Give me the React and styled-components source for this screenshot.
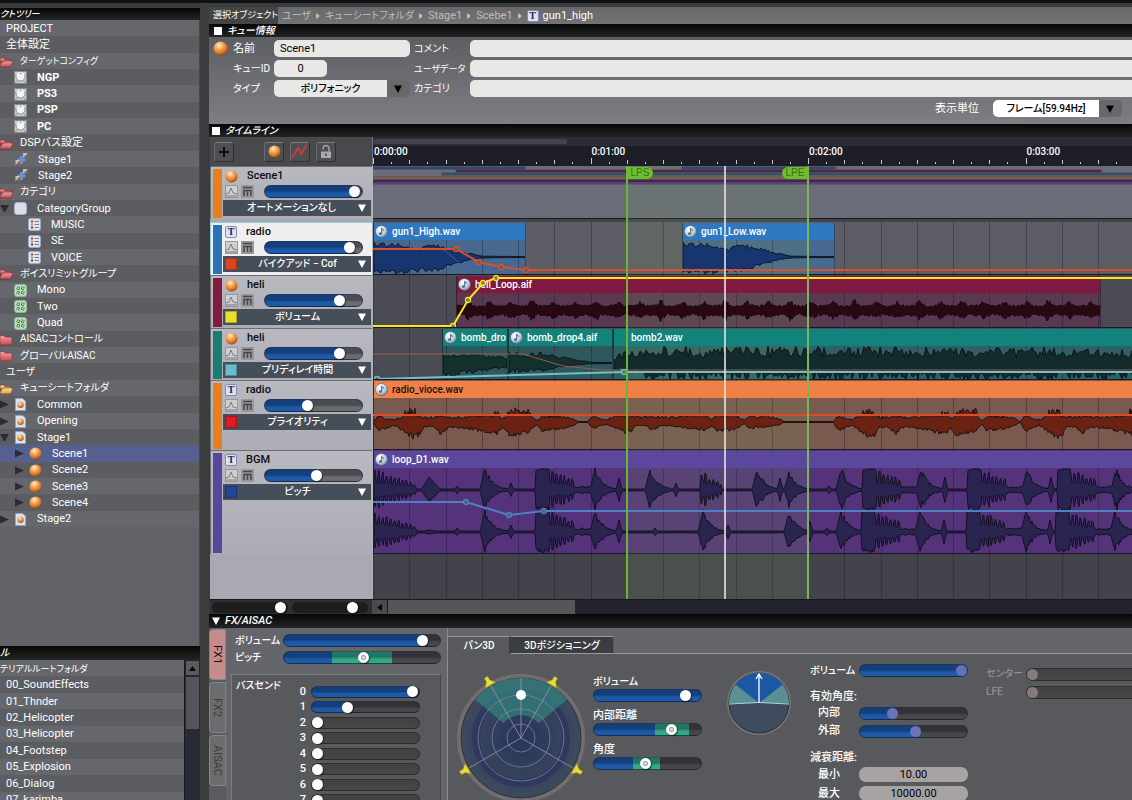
import React, { Fragment } from 'react'
import styled, { createGlobalStyle, css } from 'styled-components'

const GlobalStyle = createGlobalStyle`
  * { box-sizing: border-box; }
  body {
    margin: 0;
    overflow: hidden;
    background: #3a3c3b;
    color: #fff;
    font: 11px/14px Roboto, "Noto Sans CJK JP", sans-serif;
    font-feature-settings: "palt";
  }
  input, select, button { font: inherit; font-feature-settings: inherit; color: inherit; margin: 0; padding: 0; border: 0; }
  ul { list-style: none; margin: 0; padding: 0; }
`

/* ---------- time scale and wave forms ---------- */

const MINUTE = 217.5
const GRID = MINUTE / 6
const CANVAS = 1740

const makeRandom = seed => () => {
  seed = (seed * 16807) % 2147483647
  return seed / 2147483647
}

const interpolate = (keys, x) => {
  for (let i = 1; i < keys.length; i++) {
    if (x <= keys[i][0]) {
      const [x0, u0, d0] = keys[i - 1]
      const [x1, u1, d1] = keys[i]
      const t = (x - x0) / (x1 - x0 || 1)
      return [u0 + (u1 - u0) * t, d0 + (d1 - d0) * t]
    }
  }
  return [0.5, 0.5]
}

const toPath = (from, to, center, sample, step = 1) => {
  const top = []
  const bottom = []
  for (let x = from; x <= to; x += step) {
    const [up, down] = sample(x)
    top.push(`${x} ${(center - up).toFixed(1)}`)
    bottom.unshift(`${x} ${(center + down).toFixed(1)}`)
  }
  return `M${top.join('L')}L${bottom.join('L')}Z`
}

const envelopePath = (keys, width, center, noise, seed, step = 2) => {
  const random = makeRandom(seed)
  return toPath(0, width, center, x => {
    const [up, down] = interpolate(keys, x)
    return [up * (1 - noise * random()), down * (1 - noise * random())]
  }, step)
}

const gunKeys = [[0, 15, 17], [20, 15, 18], [40, 10, 17], [46, 8, 16], [52, 15, 18], [66, 12, 14], [80, 9, 9], [95, 4, 3], [110, 1, 1], [152, 0.5, 0.5]]
const gunPath = envelopePath(gunKeys, 152, 17, 0.35, 71)

const heliKeys = []
for (let i = 0; i < 31; i++) {
  const x = i * 21.5
  const size = i % 3 === 0 ? 12 : 10
  heliKeys.push([x, 5, 6], [x + 7, 6, 7], [x + 10, size, size], [x + 14, 7, 8], [x + 17, 5, 6])
}
const heliPath = envelopePath(heliKeys, 643, 17, 0.45, 113, 1)

const dropPath = envelopePath([[0, 9, 14], [14, 8, 13], [34, 10, 10], [48, 8, 8], [65, 6, 5]], 65, 17, 0.4, 29)
const drop4Path = envelopePath([[0, 11, 10], [20, 11, 9], [36, 12, 9], [50, 7, 5], [70, 3, 2], [84, 1, 1], [105, 0.5, 0.5]], 105, 17, 0.5, 31)
const bombPath = envelopePath([[0, 4, 6], [6, 12, 9], [22, 13, 10], [28, 18, 17], [500, 17, 16], [CANVAS, 17, 16]], 1500, 18, 0.65, 47)

const phraseKeys = [[0, 1, 1], [2, 5, 6], [6, 8, 10], [12, 4, 7], [20, 3, 4], [30, 8, 11], [40, 8, 18], [46, 7, 14], [50, 6, 6], [60, 6, 6], [67, 8, 14],
  [76, 6, 6], [92, 6, 7], [104, 8, 10], [122, 8, 14], [128, 4, 7], [135, 8, 15], [154, 8, 12], [163, 2, 3], [168, 7, 10], [186, 7, 8], [200, 4, 4], [204, 0.5, 0.5]]
const bumps = [[30, 43], [118, 126], [133, 158]]
const phrases = [[0, 1], [214, 0.96], [460, 0.91], [647, 0.91], [840, 0.95]]
const voiceRandom = makeRandom(17)
const voicePath = toPath(0, 1500, 24, x => {
  const phrase = phrases.find(([start, scale]) => x >= start && x < start + 204 * scale)
  if (!phrase) return [0.5, 0.5]
  const local = (x - phrase[0]) / phrase[1]
  const quiet = phrase[0] === 214 ? 0.7 : 1
  const [up, down] = interpolate(phraseKeys, local)
  const bump = quiet === 1 && bumps.some(([a, b]) => local > a && local < b) ? voiceRandom() * 7 : 0
  return [up * (0.55 + 0.45 * voiceRandom()) + bump, down * quiet * (0.65 + 0.35 * voiceRandom())]
})

// each event: [kind, x, size]
const leftHits = [['roll', 0, 22], ['diamond', 47, 13], ['blip', 83, 4], ['hit', 108, 22], ['blip', 137, 7], ['burst', 162, 21], ['hit', 218, 21], ['blip', 245, 12],
  ['hit', 273, 21], ['blip', 302, 7], ['roll', 327, 21, 20], ['hit', 380, 21], ['blip', 406, 12], ['hit', 412, 17], ['blip', 455, 4], ['hit', 464, 21],
  ['burst', 489, 21], ['hit', 544, 21], ['blip', 571, 13], ['burst', 594, 21], ['hit', 650, 21], ['blip', 677, 13], ['burst', 684, 21], ['hit', 739, 21]]
const rightHits = [['roll', 0, 21], ['diamond', 47, 2], ['blip', 83, 4], ['hit', 108, 21], ['blip', 137, 7], ['burst', 162, 21], ['hit', 218, 21], ['blip', 245, 12],
  ['blip', 281, 4], ['hit', 326, 21], ['blip', 354, 7], ['hit', 412, 20], ['blip', 436, 11], ['blip', 453, 4], ['hit', 464, 21],
  ['burst', 488, 21], ['hit', 543, 21], ['blip', 570, 12], ['burst', 593, 21], ['hit', 649, 21], ['blip', 676, 12], ['burst', 682, 21], ['hit', 738, 21]]

const hitSize = ([kind, start, size, length = 42], x, random) => {
  const d = x - start
  if (kind === 'hit') {
    if (d < -1 || d > 30) return 0
    if (d < 3) return size * (d + 2) / 5
    return size * Math.exp(-(d - 3) / 8) * (0.7 + 0.4 * random())
  }
  if (kind === 'blip') return Math.max(0, size * (1 - Math.abs(d) / 3))
  if (kind === 'diamond') return d < 0 ? 0 : d < 8 ? size * d / 8 : Math.max(0, size * (20 - d) / 12)
  if (kind === 'roll') {
    if (d < 0 || d > length) return 0
    return size * (1 - 0.7 * d / length) * (d % 4 < 2 ? 1 : 0.5) * (0.65 + 0.35 * random())
  }
  // burst: solid block, then decaying teeth and a low tail
  if (d < 0 || d > 55) return 0
  if (d < 13) return size - (d < 4 ? 1 : 0)
  if (d < 39) return size * (1 - 0.5 * (d - 13) / 26) * (d % 4 < 2 ? 1 : 0.45) * (0.75 + 0.25 * random())
  return 2 + 2 * random()
}
const drumPath = (hits, center, seed) => {
  const random = makeRandom(seed)
  return toPath(0, 1500, center, x => {
    const size = Math.max(1, ...hits.map(hit => hitSize(hit, x, random)))
    return [size, size * (0.8 + 0.2 * random())]
  })
}
const bgmPath = drumPath(leftHits, 22, 5) + drumPath(rightHits, 64, 9)

/* ---------- icons ---------- */

const Icon = styled.svg`
  display: block;
  flex: none;
  width: ${props => props.$size || 13}px;
  height: ${props => props.$size || 13}px;
`

const Hidden = styled.svg`
  position: absolute;
  width: 0;
  height: 0;
`

const Gradients = () => (
  <Hidden>
    <defs>
      <radialGradient id="orb" cx="0.4" cy="0.28" r="0.75">
        <stop offset="0" stopColor="#fff0d4" />
        <stop offset="0.35" stopColor="#f6ae62" />
        <stop offset="0.75" stopColor="#d9731f" />
        <stop offset="1" stopColor="#8a3d0c" />
      </radialGradient>
      <radialGradient id="note" cx="0.35" cy="0.3" r="0.8">
        <stop offset="0" stopColor="#fff" />
        <stop offset="0.6" stopColor="#c0d0e0" />
        <stop offset="1" stopColor="#5b7596" />
      </radialGradient>
      <linearGradient id="red" x2="0" y2="1">
        <stop offset="0" stopColor="#f4a0a4" />
        <stop offset="1" stopColor="#c44a52" />
      </linearGradient>
      <linearGradient id="gold" x2="0" y2="1">
        <stop offset="0" stopColor="#fbe69a" />
        <stop offset="1" stopColor="#dd9c35" />
      </linearGradient>
      <radialGradient id="panDisc">
        <stop offset="0" stopColor="#26355a" />
        <stop offset="1" stopColor="#3d4a5e" />
      </radialGradient>
    </defs>
  </Hidden>
)

const Orb = ({ size }) => (
  <Icon $size={size} viewBox="0 0 14 14"><circle cx="7" cy="7" r="6.5" fill="url(#orb)" /></Icon>
)
const Note = () => (
  <Icon viewBox="0 0 14 14">
    <circle cx="7" cy="7" r="6.5" fill="url(#note)" stroke="#466" strokeWidth="0.6" />
    <path d="M7.2 3.500v5.500M7.2 3.500q.4 1.8 2.6 2.4" fill="none" stroke="#3f5878" strokeWidth="1" />
    <ellipse cx="5.9" cy="9.3" rx="1.6" ry="1.2" fill="#3f5878" />
  </Icon>
)
const OpenFolder = ({ fill }) => (
  <Icon viewBox="0 0 13 13">
    <path d="M0 3h4l1 1.5h6V7H0z" fill={fill} stroke="#6b2a2c" strokeWidth="0.6" />
    <path d="M3 6h10l-2.2 6H0V10z" fill={fill} stroke="#6b2a2c" strokeWidth="0.6" />
  </Icon>
)
const Folder = () => (
  <Icon viewBox="0 0 13 13"><path d="M0 2.5h4L5.2 4H12v8H0z" fill="url(#red)" stroke="#7a2e33" strokeWidth="0.6" /></Icon>
)
const ConfigIcon = () => (
  <Icon viewBox="0 0 13 13">
    <rect x="0.5" y="0.5" width="12" height="12" fill="#c9cacc" stroke="#8a8b8d" />
    <circle cx="6.5" cy="5.500" r="4.500" fill="#f2f3f4" />
    <path d="M2 3.500v2a4.500 4.500 0 0 0 9 0v-2" fill="none" stroke="#77787b" strokeWidth="0.8" />
    <path d="M1 12l2.500-2M12 12l-2.500-2" stroke="#8d8e90" />
    <circle cx="6.5" cy="2.500" r="0.800" fill="#4a90d8" />
  </Icon>
)
const BusIcon = () => (
  <Icon viewBox="0 0 13 13">
    <path d="M5 3h3v2.500h2.500v3H8V11H5V8.500H2.500v-3H5z" fill="#6c92d6" />
    <rect x="8" width="5" height="5" fill="#c4bfb8" />
    <path d="M13 0v5H8z" fill="#716a64" />
    <rect x="0.500" y="7" width="5" height="5" fill="#c4bfb8" />
    <path d="M5.500 7v5h-5z" fill="#716a64" />
  </Icon>
)
const GroupIcon = () => (
  <Icon viewBox="0 0 13 13"><rect x="0.5" y="0.5" width="12" height="12" rx="2.5" fill="#d9dcea" stroke="#aeb2c4" /></Icon>
)
const CategoryIcon = () => (
  <Icon viewBox="0 0 13 13">
    <rect x="0.5" y="0.5" width="12" height="12" rx="2" fill="#dfe2ef" stroke="#a3a8bd" />
    <path d="M6.500 3.500h4.500M6.500 6.500h4.500M6.500 9.500h4.500" stroke="#7a7f9c" />
    <path d="M3 3.500h2" stroke="#c33" strokeWidth="2" />
    <path d="M3 6.500h2" stroke="#e08a28" strokeWidth="2" />
    <path d="M3 9.500h2" stroke="#2e4ba8" strokeWidth="2" />
  </Icon>
)
const LimitIcon = () => (
  <Icon viewBox="0 0 13 13">
    <rect x="0.5" y="0.5" width="12" height="12" rx="2.5" fill="#b9dfbb" stroke="#8fb593" />
    <path d="M3 5.500V3h2.500v2.500zM7.500 5.500V3H10v2.500zM3 10V7.500h2.500V10zM7.500 10V7.500H10V10z" fill="none" stroke="#3e6b45" strokeDasharray="1.6 0.9" />
  </Icon>
)
const SheetIcon = () => (
  <Icon viewBox="0 0 13 13">
    <path d="M1.500 0.500h7l3 2.500v9.500h-10z" fill="#d4e6f6" stroke="#86a9ca" />
    <circle cx="6.500" cy="6.800" r="3.200" fill="url(#orb)" />
  </Icon>
)
const Disclosure = ({ open }) => (
  <Icon $size={9} viewBox="0 0 9 9"><path d={open ? 'M0 1h9L4.500 9z' : 'M0 0.500l9 4-9 4z'} fill="#2c2d30" /></Icon>
)

const TextBadge = styled.span`
  flex: none;
  width: 12px;
  height: 12px;
  border: 1px solid #8288ae;
  border-radius: 2px;
  background: #dfe2f2;
  color: #1d2450;
  font: bold 10px/10px "Liberation Serif", serif;
  text-align: center;
`

/* ---------- shared controls ---------- */

const thumb = css`
  appearance: none;
  width: 11px;
  height: 11px;
  border-radius: 50%;
  background: ${props => props.$muted ? props.$muted : '#fdfdfd'};
  box-shadow: ${props => props.$muted ? 'none' : '1px 1px 1px rgba(0, 0, 0, 0.5)'};
  border: ${props => props.$ringed ? '1px solid #fff' : '0'};
  ${props => props.$ringed && css`background: radial-gradient(circle, #ddd 1px, #999 2px, #fff 3px);`}
`

const fill = props => {
  const { $level, $range, $base } = props
  if ($range) {
    return `linear-gradient(to right, #1d5aa8 ${$range[0]}%, #32a988 ${$range[0]}%, #32a988 ${$range[1]}%, ${$base} ${$range[1]}%)`
  }
  return `linear-gradient(to right, #1d5aa8 ${$level}%, ${$base} ${$level}%)`
}

const shade = 'linear-gradient(rgba(0, 0, 20, 0.3), rgba(0, 0, 20, 0.3) 45%, transparent 65%)'
const flatShade = 'linear-gradient(rgba(0, 0, 0, 0.08), transparent)'

const Range = styled.input.attrs({ type: 'range' })`
  appearance: none;
  display: block;
  flex: ${props => props.$width ? 'none' : '1'};
  width: ${props => props.$width ? `${props.$width}px` : '100%'};
  min-width: 0;
  height: ${props => props.$height || 13}px;
  border: 1px solid rgba(30, 30, 34, 0.55);
  border-radius: 7px;
  background: ${props => props.$level > 5 || props.$range ? shade : flatShade}, ${fill};
  &::-webkit-slider-thumb { ${thumb} }
  &::-moz-range-thumb { ${thumb} }
`

const Slider = ({ label, value, level, range, width, height, base = '#474747', muted }) => (
  <Range
    aria-label={label}
    defaultValue={value}
    $level={level === undefined ? value : level}
    $range={range}
    $ringed={Boolean(range)}
    $width={width}
    $height={height}
    $base={base}
    $muted={muted}
  />
)

const PanelTitle = styled.h2`
  flex: none;
  display: flex;
  align-items: center;
  gap: 5px;
  height: ${props => props.$height || 13}px;
  margin: 0;
  padding-left: ${props => props.$inset === undefined ? 5 : props.$inset}px;
  background: linear-gradient(#060606, #232525);
  font-size: ${props => props.$size || 10}px;
  line-height: 12px;
  font-weight: 500;
  font-style: italic;
  white-space: nowrap;
  overflow: hidden;
`
const Square = styled.span`
  width: 8px;
  height: 8px;
  background: #fff;
`

/* ---------- left side ---------- */

const Shell = styled.div`
  display: grid;
  grid-template-columns: 209px minmax(0, 1fr);
  height: 100vh;
  border-top: 3px solid #101116;
`
const Side = styled.aside`
  display: flex;
  flex-direction: column;
  min-height: 0;
  padding-top: 5px;
  border-right: 9px solid #3b3d3c;
`
const TreeArea = styled.div`
  flex: 1;
  min-height: 0;
  overflow: hidden;
  background: #616267;
  border-right: 1px solid #4b4741;
`
const TreeList = styled.ul`
  display: grid;
  grid-auto-rows: 1fr;
  height: ${props => props.$height}px;
`
const TreeRow = styled.li`
  display: flex;
  align-items: center;
  gap: ${props => props.$gap || 0}px;
  min-height: 0;
  padding: 1px 0 0 ${props => props.$indent}px;
  white-space: nowrap;
  font-size: ${props => props.$size || 11}px;
  font-weight: ${props => props.$strong ? 700 : 400};
  background: ${props => props.$selected ? '#556091' : '#66676c'};
  &:nth-child(even) { background: ${props => props.$selected ? '#556091' : '#5c5d61'}; }
`
const Toggle = styled.span`
  width: 14px;
  flex: none;
`
const Label = styled.span`
  padding-left: 10px;
`

const redOpen = <OpenFolder fill="url(#red)" />
const treeItems = [
  { text: 'PROJECT', indent: 6 },
  { text: '全体設定', indent: 6 },
  { text: 'ターゲットコンフィグ', icon: redOpen, size: 9 },
  { text: 'NGP', indent: 14, icon: <ConfigIcon />, strong: true },
  { text: 'PS3', indent: 14, icon: <ConfigIcon />, strong: true },
  { text: 'PSP', indent: 14, icon: <ConfigIcon />, strong: true },
  { text: 'PC', indent: 14, icon: <ConfigIcon />, strong: true },
  { text: 'DSPバス設定', icon: redOpen },
  { text: 'Stage1', indent: 15, icon: <BusIcon /> },
  { text: 'Stage2', indent: 15, icon: <BusIcon /> },
  { text: 'カテゴリ', icon: redOpen, size: 10 },
  { text: 'CategoryGroup', toggle: 'open', icon: <GroupIcon /> },
  { text: 'MUSIC', indent: 28, icon: <CategoryIcon /> },
  { text: 'SE', indent: 28, icon: <CategoryIcon /> },
  { text: 'VOICE', indent: 28, icon: <CategoryIcon /> },
  { text: 'ボイスリミットグループ', icon: redOpen, size: 10 },
  { text: 'Mono', indent: 14, icon: <LimitIcon /> },
  { text: 'Two', indent: 14, icon: <LimitIcon /> },
  { text: 'Quad', indent: 14, icon: <LimitIcon /> },
  { text: 'AISACコントロール', icon: <Folder />, size: 10 },
  { text: 'グローバルAISAC', icon: <Folder />, size: 10 },
  { text: 'ユーザ', indent: 6, size: 10 },
  { text: 'キューシートフォルダ', icon: <OpenFolder fill="url(#gold)" />, size: 10 },
  { text: 'Common', toggle: 'closed', icon: <SheetIcon /> },
  { text: 'Opening', toggle: 'closed', icon: <SheetIcon /> },
  { text: 'Stage1', toggle: 'open', icon: <SheetIcon /> },
  { text: 'Scene1', indent: 15, toggle: 'closed', icon: <Orb />, selected: true },
  { text: 'Scene2', indent: 15, toggle: 'closed', icon: <Orb /> },
  { text: 'Scene3', indent: 15, toggle: 'closed', icon: <Orb /> },
  { text: 'Scene4', indent: 15, toggle: 'closed', icon: <Orb /> },
  { text: 'Stage2', toggle: 'closed', icon: <SheetIcon /> }
]

const Materials = styled.div`
  flex: none;
  display: flex;
  height: 140px;
  overflow: hidden;
  background: #66676c;
`
const MaterialList = styled(TreeList)`
  flex: 1;
`
const MaterialScroll = styled.div`
  flex: none;
  display: flex;
  flex-direction: column;
  width: 16px;
  border-left: 1px solid #17181b;
  background: #292a38;
`
const ScrollButton = styled.button`
  display: grid;
  place-items: center;
  height: 16px;
  background: #5a5b60;
  border: 1px solid #222326;
`
const ScrollThumb = styled.div`
  height: 54px;
  background: #55565b;
  border: 1px solid #2a2b2e;
`

const materials = ['00_SoundEffects', '01_Thnder', '02_Helicopter', '03_Helicopter', '04_Footstep', '05_Explosion', '06_Dialog', '07_karimba']

const SidePanel = () => (
  <Side>
    <PanelTitle $height={12} $inset={0} $size={9}>クトツリー</PanelTitle>
    <TreeArea>
      <TreeList $height={507}>
        {treeItems.map((item, i) => (
          <TreeRow
            key={i}
            $indent={item.indent || 0}
            $gap={item.icon && !item.toggle && !item.indent ? 7 : 0}
            $strong={item.strong}
            $size={item.size}
            $selected={item.selected}
          >
            {item.toggle && <Toggle><Disclosure open={item.toggle === 'open'} /></Toggle>}
            {item.icon}
            {item.icon && (item.toggle || item.indent) ? <Label>{item.text}</Label> : item.text}
          </TreeRow>
        ))}
      </TreeList>
    </TreeArea>
    <PanelTitle $height={14} $inset={0}>ル</PanelTitle>
    <Materials>
      <MaterialList $height={148}>
        <TreeRow $indent={0} $size={9}>テリアルルートフォルダ</TreeRow>
        {materials.map(name => <TreeRow key={name} $indent={6}>{name}</TreeRow>)}
      </MaterialList>
      <MaterialScroll>
        <ScrollButton aria-label="Scroll up">
          <Icon $size={7} viewBox="0 0 7 7"><path d="M3.500 1L7 6H0z" fill="#08080a" /></Icon>
        </ScrollButton>
        <ScrollThumb />
      </MaterialScroll>
    </Materials>
  </Side>
)

/* ---------- object path and cue form ---------- */

const Main = styled.main`
  display: flex;
  flex-direction: column;
  min-width: 0;
  min-height: 0;
  border-top: 4px solid #3b3d3c;
`
const Path = styled.nav`
  flex: none;
  display: flex;
  align-items: center;
  height: 17px;
  background: linear-gradient(#676869, #727374);
  white-space: nowrap;
`
const PathTab = styled.span`
  height: 17px;
  width: 69px;
  padding-left: 4px;
  line-height: 17px;
  font-size: 9px;
  background: #434544;
`
const Crumbs = styled.div`
  display: flex;
  align-items: center;
  gap: 4px;
  padding-left: 4px;
`
const Crumb = styled.a`
  color: ${props => props.$current ? '#fff' : '#bcbdbe'};
  font-size: ${props => props.$size || 11}px;
  text-decoration: none;
`
const crumbArrow = <Icon $size={6} viewBox="0 0 6 8"><path d="M0.500 0L5.500 4l-5 4z" fill="#c4c5c6" /></Icon>

const CueForm = styled.form`
  flex: none;
  padding: 3px 0 7px 4px;
  background: linear-gradient(#5d5e62, #7e7e85);
`
const CueGrid = styled.div`
  display: grid;
  grid-template-columns: 20px 41px 136px 60px minmax(0, 1fr);
  grid-auto-rows: 17px;
  row-gap: 3px;
  align-items: center;
`
const FieldLabel = styled.label`
  grid-column: ${props => props.$column};
  padding-left: ${props => props.$column === 4 ? 4 : 0}px;
  white-space: nowrap;
  font-size: ${props => props.$size || 11}px;
`
const Field = styled.input`
  width: ${props => props.$short ? '53px' : '100%'};
  height: 17px;
  padding: 0 6px;
  border-radius: ${props => props.$open ? '5px 0 0 5px' : '5px'};
  background: #e8e8e7;
  color: #000;
  text-align: ${props => props.$short ? 'center' : 'left'};
`
const SelectBox = styled.span`
  display: flex;
  align-items: center;
  width: ${props => props.$width}px;
  height: 17px;
  padding-right: 8px;
  border-radius: 5px;
  background: #68686a;
  select {
    appearance: none;
    flex: 1;
    height: 17px;
    margin-right: 7px;
    border-radius: 5px 0 0 5px;
    background: ${props => props.$bright ? '#fff' : '#e8e8e7'};
    color: #000;
    font-size: 10px;
    font-weight: 500;
    text-align-last: center;
  }
`
const DownArrow = ({ color }) => (
  <Icon $size={8} viewBox="0 0 8 8"><path d="M0 0.500h8L4 8z" fill={color} /></Icon>
)
const UnitRow = styled.div`
  display: flex;
  justify-content: flex-end;
  align-items: center;
  gap: 14px;
  margin-top: 3px;
  padding-right: 10px;
`

const CueInfo = () => (
  <Fragment>
    <Path>
      <PathTab>選択オブジェクト</PathTab>
      <Crumbs>
        <Crumb href="#user" $size={10}>ユーザ</Crumb>{crumbArrow}
        <Crumb href="#folder" $size={10}>キューシートフォルダ</Crumb>{crumbArrow}
        <Crumb href="#stage1">Stage1</Crumb>{crumbArrow}
        <Crumb href="#scebe1">Scebe1</Crumb>{crumbArrow}
        <TextBadge>T</TextBadge>
        <Crumb href="#gun" $current>gun1_high</Crumb>
      </Crumbs>
    </Path>
    <PanelTitle><Square />キュー情報</PanelTitle>
    <CueForm>
      <CueGrid>
        <Orb size={15} />
        <FieldLabel htmlFor="name" $column={2}>名前</FieldLabel>
        <Field id="name" defaultValue="Scene1" />
        <FieldLabel htmlFor="comment" $column={4} $size={10}>コメント</FieldLabel>
        <Field id="comment" $open />
        <FieldLabel htmlFor="cueId" $column={2} $size={10}>キューID</FieldLabel>
        <Field id="cueId" defaultValue="0" $short />
        <FieldLabel htmlFor="userData" $column={4} $size={9}>ユーザデータ</FieldLabel>
        <Field id="userData" $open />
        <FieldLabel htmlFor="type" $column={2} $size={10}>タイプ</FieldLabel>
        <SelectBox $width={136}>
          <select id="type"><option>ポリフォニック</option></select>
          <DownArrow color="#000" />
        </SelectBox>
        <FieldLabel htmlFor="category" $column={4} $size={10}>カテゴリ</FieldLabel>
        <Field id="category" $open />
      </CueGrid>
      <UnitRow>
        <FieldLabel htmlFor="unit">表示単位</FieldLabel>
        <SelectBox $width={129} $bright>
          <select id="unit"><option>フレーム[59.94Hz]</option></select>
          <DownArrow color="#000" />
        </SelectBox>
      </UnitRow>
    </CueForm>
  </Fragment>
)

/* ---------- timeline ---------- */

const TimelineGrid = styled.section`
  flex: none;
  display: grid;
  grid-template-columns: 162px minmax(0, 1fr);
  border-left: 1px solid #3b3d3c;
`
const Toolbar = styled.div`
  display: flex;
  align-items: center;
  gap: 6px;
  height: 29px;
  padding-left: 4px;
  background: #48494c;
`
const ToolButton = styled.button`
  display: grid;
  place-items: center;
  width: 20px;
  height: 20px;
  margin-right: ${props => props.$apart ? 24 : 0}px;
  border: 1px solid #2f3033;
  border-top-color: #7c7d80;
  border-left-color: #6a6b6e;
  border-radius: 3px;
  background: #4e4f52;
`
const Ruler = styled.div`
  position: relative;
  height: 29px;
  border-left: 1px solid #77787c;
  background: linear-gradient(#2c2c37 9px, #1e1e29 9px);
  overflow: hidden;
`
const RulerThumb = styled.div`
  width: 194px;
  height: 5px;
  margin-top: 2px;
  border-radius: 3px;
  background: #43434d;
`
const RulerMark = styled.span`
  position: absolute;
  top: 8px;
  padding-left: 1px;
  font-size: 10px;
  font-weight: 500;
`
const RulerTicks = styled.svg`
  position: absolute;
  left: 0;
  top: 21px;
  width: ${CANVAS}px;
  height: 8px;
`

const Heads = styled.div`
  display: flex;
  flex-direction: column;
  background: #a9a9b1;
`
const Head = styled.div`
  display: grid;
  grid-template-columns: 9px minmax(0, 1fr);
  gap: 1px;
  height: ${props => props.$height}px;
  padding: 2px 1px 1px 2px;
  border: 1px solid ${props => props.$active ? '#8fd0d8' : '#6d6d74'};
  border-width: 1px 0 0 1px;
  margin-bottom: ${props => props.$gap || 0}px;
  background: ${props => props.$active ? '#efeff1' : 'linear-gradient(#b9b9c2, #acacb5)'};
  color: #0c0c0e;
`
const Stripe = styled.span`
  background: ${props => props.$color};
`
const HeadTitle = styled.div`
  display: flex;
  align-items: center;
  gap: 9px;
  height: 14px;
  padding-left: 2px;
  font-weight: 500;
`
const HeadControls = styled.div`
  display: flex;
  align-items: center;
  gap: 3px;
  height: 17px;
  padding: 0 8px 0 2px;
  input { margin-left: 7px; }
`
const MiniButton = styled.button`
  display: grid;
  place-items: center;
  width: 13px;
  height: 13px;
  border: 1px solid #98989c;
  background: ${props => props.$pressed ? '#97979a' : '#cfcfd1'};
`
const HeadSelect = styled.div`
  display: flex;
  align-items: center;
  height: 16px;
  padding: 0 5px 0 2px;
  background: #454e59;
  color: #fff;
  select {
    appearance: none;
    flex: 1;
    min-width: 0;
    background: transparent;
    text-align-last: center;
    font-size: 10px;
    font-weight: 500;
  }
`
const Swatch = styled.span`
  width: 12px;
  height: 12px;
  border: 1px solid rgba(0, 0, 0, 0.25);
  background: ${props => props.$color};
`

const Lanes = styled.div`
  position: relative;
  z-index: 0;
  overflow: hidden;
  height: 433px;
  border-left: 1px solid #b4b4ba;
  background: #43444b;
`
const Lane = styled.div`
  position: relative;
  height: ${props => props.$height}px;
  margin-bottom: ${props => props.$gap || 0}px;
  border-bottom: 1px solid #1d1820;
  background: ${props => props.$color};
  overflow: hidden;
`
// clips sit on the free time axis, so their place is their start time
const Clip = styled.div`
  position: absolute;
  display: flex;
  flex-direction: column;
  top: 1px;
  bottom: 0;
  left: ${props => props.$start}px;
  width: ${props => props.$length}px;
  border-left: 1px solid rgba(0, 0, 0, 0.4);
  border-right: 1px solid rgba(0, 0, 0, 0.3);
  background: ${props => props.$body};
  overflow: hidden;
`
// titles and waves stay above the grid and the loop tint
const ClipTitle = styled.div`
  position: relative;
  z-index: 1;
  flex: none;
  display: flex;
  align-items: center;
  gap: 4px;
  height: 17px;
  padding-left: ${props => props.$inset || 1}px;
  background: ${props => props.$color};
  color: ${props => props.$dark ? '#20100a' : '#fff'};
  font-size: 10px;
  font-weight: 500;
  white-space: nowrap;
`
const Wave = styled.svg`
  position: relative;
  z-index: 1;
  flex: none;
  width: ${CANVAS}px;
  height: 86px;
`
const Curve = styled.svg`
  position: absolute;
  z-index: 2;
  left: 0;
  top: 0;
  width: ${CANVAS}px;
  height: 100%;
`
const Overlay = styled(Curve)`
  z-index: ${props => props.$level};
  pointer-events: none;
`
const Flag = styled.span`
  position: absolute;
  z-index: 4;
  top: 1px;
  left: ${props => props.$left}px;
  width: 26px;
  height: 12px;
  border-radius: ${props => props.$end ? '6px 0 0 6px' : '0 6px 6px 0'};
  background: #6cbf2a;
  color: #3c6e22;
  font: 10px/12px "Liberation Sans", sans-serif;
  text-align: center;
`

const tracks = [
  {
    name: 'Scene1', kind: 'cue', color: '#e87f1e', value: 98, level: 90, automation: 'オートメーションなし', height: 53, gap: 3, lane: '#6b6c79'
  },
  {
    name: 'radio', kind: 'text', color: '#2b72b4', value: 92, level: 85, automation: 'バイクアッド − Cof', swatch: '#dc4523', height: 53, lane: '#5d5d66', active: true,
    clips: [
      { name: 'gun1_High.wav', start: 0, length: 153, title: '#2f78bf', body: '#47688f', wave: gunPath, ink: '#17356f' },
      { name: 'gun1_Low.wav', start: 309, length: 153, title: '#2f78bf', body: '#47688f', wave: gunPath, ink: '#17356f' }
    ],
    curves: [
      { color: '#3d5fae', points: [[0, 27], [70, 27], [92, 46], [152, 46]], thin: true },
      { color: '#d8502f', points: [[0, 27], [83, 27], [106, 40], [128, 45], [153, 48], [CANVAS, 48]], knobs: 4 }
    ]
  },
  {
    name: 'heli', kind: 'cue', color: '#7e1c42', value: 80, automation: 'ボリューム', swatch: '#e8e02a', height: 53, lane: '#4a4b54',
    clips: [{ name: 'heli_Loop.aif', start: 83, length: 645, title: '#7f1941', body: '#5a3852', wave: heliPath, ink: '#2b0711' }],
    curves: [{ color: '#fbe81a', points: [[0, 51], [80, 51], [95, 25], [110, 8], [123, 3], [CANVAS, 3]], knobs: 4 }]
  },
  {
    name: 'heli', kind: 'cue', color: '#1b7c74', value: 80, automation: 'プリディレイ時間', swatch: '#69bccb', height: 52, lane: '#4a4b54',
    clips: [
      { name: 'bomb_dro', start: 69, length: 66, title: '#12827c', body: '#2f585c', wave: dropPath, ink: '#14302f' },
      { name: 'bomb_drop4.aif', start: 135, length: 105, title: '#12827c', body: '#2f585c', wave: drop4Path, ink: '#14302f' },
      { name: 'bomb2.wav', start: 240, length: CANVAS, title: '#12827c', body: '#2f6063', wave: bombPath, ink: '#132b2a', inset: 17 }
    ],
    curves: [
      { color: '#9a5a48', points: [[0, 26], [150, 26], [190, 38], [230, 42], [CANVAS, 42]], thin: true },
      { color: '#6bc1cc', points: [[4, 51], [251, 44], [CANVAS, 44]], knobs: -1 }
    ]
  },
  {
    name: 'radio', kind: 'text', color: '#e87f1e', value: 43, automation: 'プライオリティ', swatch: '#d81e22', height: 70, lane: '#7a594e',
    clips: [{ name: 'radio_vioce.wav', start: 0, length: CANVAS, title: '#f08045', body: '#7a594e', wave: voicePath, ink: '#6c2213', dark: true }],
    curves: [{ color: '#e04a26', points: [[0, 35], [CANVAS, 35]] }]
  },
  {
    name: 'BGM', kind: 'text', color: '#57469a', value: 54, automation: 'ピッチ', swatch: '#20479a', height: 104, lane: '#54337a',
    clips: [{ name: 'loop_D1.wav', start: 0, length: CANVAS, title: '#5b489c', body: '#54337a', wave: bgmPath, ink: '#2a2550' }],
    curves: [{ color: '#4d80c4', points: [[0, 52], [93, 52], [136, 65], [171, 61], [CANVAS, 61]], knobs: 3 }]
  }
]

const overview = [
  [0, 1, 152, '#28548c'], [309, 1, 153, '#28548c'], [83, 4, 645, '#5c2445'], [69, 7, CANVAS, '#2a666b'],
  [0, 11, CANVAS, '#9a7358'], [0, 14, CANVAS, '#5a2444'], [0, 16, CANVAS, '#6a48a0']
]

const TrackHead = ({ track }) => (
  <Head $height={track.height} $gap={track.gap} $active={track.active}>
    <Stripe $color={track.color} />
    <div>
      <HeadTitle>
        {track.kind === 'text' ? <TextBadge>T</TextBadge> : <Orb />}
        {track.name}
      </HeadTitle>
      <HeadControls>
        <MiniButton aria-label="Envelope">
          <Icon $size={11} viewBox="0 0 11 11"><path d="M0 8l3-1 2-5 2 5 4 1M0 10h11" fill="none" stroke="#666" strokeWidth="0.8" /></Icon>
        </MiniButton>
        <MiniButton aria-label="Mute" $pressed>
          <Icon $size={11} viewBox="0 0 11 11"><path d="M1 1.500h9M2 10V4.500h7V10M5.500 5v5" fill="none" stroke="#46464a" strokeWidth="1.500" /></Icon>
        </MiniButton>
        <Slider label={`${track.name} level`} value={track.value} level={track.level} base="#6c6c6e" />
      </HeadControls>
      <HeadSelect>
        {track.swatch && <Swatch $color={track.swatch} />}
        <select aria-label={`${track.name} automation`}><option>{track.automation}</option></select>
        <DownArrow color="#fff" />
      </HeadSelect>
    </div>
  </Head>
)

const TrackLane = ({ track }) => (
  <Lane $height={track.height} $gap={track.gap} $color={track.lane}>
    {(track.clips || []).map(clip => (
      <Clip key={clip.start} $start={clip.start} $length={clip.length} $body={clip.body}>
        <ClipTitle $color={clip.title} $dark={clip.dark} $inset={clip.inset}>
          {!clip.inset && <Note />}
          {clip.name}
        </ClipTitle>
        <Wave><path d={clip.wave} fill={clip.ink} stroke="#0b0a10" strokeWidth="0.8" /></Wave>
      </Clip>
    ))}
    {track.curves ? (
      <Curve>
        {track.curves.map(curve => (
          <Fragment key={curve.color}>
            <polyline
              points={curve.points.map(p => p.join(',')).join(' ')}
              fill="none"
              stroke={curve.color}
              strokeWidth={curve.thin ? 1 : 2}
            />
            {curve.knobs && (curve.knobs < 0 ? curve.points.slice(0, 2) : curve.points.slice(1, curve.knobs + 1)).map(([x, y]) => (
              <circle key={x} cx={x} cy={y} r="2.500" fill="#55585c" fillOpacity="0.7" stroke={curve.color} strokeWidth="1.300" />
            ))}
          </Fragment>
        ))}
      </Curve>
    ) : (
      <Curve>
        {overview.map(([x, y, width, color], i) => <rect key={i} x={x} y={y} width={width} height="2" fill={color} stroke="#3a2c44" strokeWidth="0.6" />)}
      </Curve>
    )}
  </Lane>
)

const Bottom = styled.div`
  display: flex;
  align-items: center;
  gap: 4px;
  height: 15px;
  padding: 0 4px 0 2px;
  background: #2e2f30;
  border-top: 1px solid #17181a;
`
const Scroll = styled.div`
  display: flex;
  height: 15px;
  border-top: 1px solid #17181a;
  background: #232330;
`
const ScrollLeft = styled.button`
  display: grid;
  place-items: center;
  width: 16px;
  background: #4a4b4f;
  border-right: 1px solid #1a1a1c;
`
const ScrollBody = styled.div`
  width: 187px;
  background: #55565a;
`

const lines = Array.from({ length: 48 }, (_, i) => i)
// only the minutes whose label fits beside the heads
const minutes = lines.filter(i => 373 + i * MINUTE + 40 < window.innerWidth)

const Timeline = () => (
  <Fragment>
    <PanelTitle $inset={3}><Square />タイムライン</PanelTitle>
    <TimelineGrid>
      <Toolbar>
        <ToolButton aria-label="Add track" $apart>
          <Icon $size={12} viewBox="0 0 12 12"><path d="M6 1v10M1 6h10" stroke="#0c0c0e" strokeWidth="2" /></Icon>
        </ToolButton>
        <ToolButton aria-label="Cue"><Orb /></ToolButton>
        <ToolButton aria-label="Automation">
          <Icon $size={18} viewBox="0 0 18 18"><path d="M1 15L7 5l3 6 6-9" fill="none" stroke="#d83a44" strokeWidth="1.600" /></Icon>
        </ToolButton>
        <ToolButton aria-label="Lock">
          <Icon $size={14} viewBox="0 0 14 14">
            <path d="M4 4.500V3.500a3 3 0 0 1 6 0V6.500" fill="none" stroke="#a9aaac" strokeWidth="1.300" />
            <rect x="2" y="6.500" width="10" height="6.500" fill="#a9aaac" />
            <path d="M7 8.500v2.500" stroke="#3c3c40" strokeWidth="1.500" />
          </Icon>
        </ToolButton>
      </Toolbar>
      <Ruler>
        <RulerThumb />
        {minutes.map(minute => (
          <RulerMark key={minute} style={{ left: minute * MINUTE }}>0:0{minute}:00</RulerMark>
        ))}
        <RulerTicks>
          {lines.map(i => (
            <Fragment key={i}>
              <rect x={Math.round(i * GRID)} y={i % 6 ? 2 : 0} width="1" height={i % 6 ? 4 : 6} fill="#c9c9cf" />
              <rect x={Math.round((i + 0.5) * GRID)} y="4" width="1" height="2" fill="#c9c9cf" />
            </Fragment>
          ))}
        </RulerTicks>
      </Ruler>
      <Heads>
        {tracks.map((track, i) => <TrackHead key={i} track={track} />)}
      </Heads>
      <Lanes>
        {tracks.map((track, i) => <TrackLane key={i} track={track} />)}
        <Overlay $level={0}>
          {lines.map(i => <rect key={i} x={Math.round(i * GRID)} y="56" width="1" height="377" fill="#14142a" fillOpacity="0.35" />)}
          <rect x="254" y="0" width="181" height="433" fill="#7aa05a" fillOpacity="0.14" />
        </Overlay>
        <Overlay $level={3}>
          <rect x="253" y="0" width="2" height="433" fill="#68b53a" />
          <rect x="434" y="0" width="2" height="433" fill="#78b558" />
          <rect x="351" y="0" width="2" height="433" fill="#e4e4e4" fillOpacity="0.8" />
        </Overlay>
        <Flag $left={254}>LPS</Flag>
        <Flag $left={409} $end>LPE</Flag>
      </Lanes>
      <Bottom>
        <Slider label="Vertical zoom" value={98} level={0} height={11} base="#1d1e1f" />
        <Slider label="Horizontal zoom" value={85} level={0} height={11} base="#1d1e1f" />
      </Bottom>
      <Scroll>
        <ScrollLeft aria-label="Scroll left">
          <Icon $size={7} viewBox="0 0 7 7"><path d="M6 0v7L1 3.500z" fill="#050505" /></Icon>
        </ScrollLeft>
        <ScrollBody />
      </Scroll>
    </TimelineGrid>
  </Fragment>
)

/* ---------- effects ---------- */

const Effects = styled.section`
  flex: 1;
  display: grid;
  grid-template-columns: 17px 222px minmax(0, 1fr);
  min-height: 0;
  overflow: hidden;
  background: #65666b;
`
const EffectTabs = styled.div`
  display: flex;
  flex-direction: column;
  gap: 2px;
  padding-top: 1px;
  background: #595a62;
`
const EffectTab = styled.button`
  width: 17px;
  height: 51px;
  writing-mode: vertical-rl;
  border-radius: 4px 0 0 4px;
  border: 1px solid #85868a;
  background: ${props => props.$active ? '#c68c8c' : '#6b6c6e'};
  color: ${props => props.$active ? '#1a0c0c' : '#3a3b3d'};
  line-height: 15px;
`
const Sends = styled.div`
  padding: 4px 6px 0 5px;
  border-right: 1px solid #8c8d92;
`
const SliderRow = styled.label`
  display: flex;
  align-items: center;
  gap: ${props => props.$gap || 0}px;
  height: ${props => props.$height || 17}px;
`
const Caption = styled.span`
  flex: none;
  width: ${props => props.$width}px;
  padding-left: ${props => props.$inset || 0}px;
  font-size: ${props => props.$small ? 10 : 11}px;
  font-weight: 500;
  white-space: nowrap;
  text-align: ${props => props.$align || 'left'};
  color: ${props => props.$muted ? '#8f8f93' : '#fff'};
`
const SendBox = styled.div`
  display: grid;
  grid-template-columns: 62px minmax(0, 1fr);
  margin-top: 8px;
  padding: 4px 20px 0 4px;
  border: 1px solid #7c7d82;
  border-right-color: #46474b;
  background: #58595d;
`
const SendList = styled.div`
  display: grid;
  grid-auto-rows: 1fr;
  height: 124px;
  margin-top: 5px;
`

const sends = [99, 31, 0, 0, 0, 0, 0, 0]

const Pan = styled.div`
  display: flex;
  flex-direction: column;
  min-width: 0;
`
const PanTabs = styled.div`
  display: flex;
  align-items: flex-end;
  height: 26px;
  &::after {
    content: '';
    flex: 1;
    border-bottom: 1px solid #9b9ca0;
  }
`
const PanTab = styled.button`
  width: ${props => props.$active ? 62 : 104}px;
  height: 18px;
  border: 1px solid #98999d;
  border-color: #98999d ${props => props.$active ? '#3a3a3d' : '#58595d'} ${props => props.$active ? '#58595d' : '#9b9ca0'} transparent;
  background: ${props => props.$active ? '#58595d' : '#3c3d40'};
  font-size: 10px;
  line-height: 15px;
  font-weight: 500;
  white-space: nowrap;
`
const PanBody = styled.div`
  flex: 1;
  display: flex;
  align-items: flex-start;
  padding-left: 6px;
  background: #58595d;
`
const PanDial = styled.svg`
  flex: none;
  width: 134px;
  height: 134px;
  margin: 17px 5px 0 0;
`
const AngleDial = styled.svg`
  flex: none;
  width: 66px;
  height: 66px;
  margin: 16px 18px 0 24px;
`
const PanSliders = styled.div`
  flex: none;
  width: 109px;
  margin-top: 21px;
  label { display: block; margin-bottom: 7px; }
`
const Distance = styled.div`
  flex: none;
  width: 158px;
  margin-top: 8px;
`
const Group = styled.div`
  margin-top: 11px;
`
const ValueInput = styled.input`
  flex: 1;
  min-width: 0;
  height: 15px;
  border-radius: 7px;
  background: #a8a3a3;
  color: #000;
  text-align: center;
`
const Disabled = styled.div`
  flex: 1;
  min-width: 0;
  margin: 11px 0 0 18px;
`

const polar = (cx, cy, r, degrees) => {
  const a = degrees * Math.PI / 180
  return [(cx + r * Math.sin(a)).toFixed(1), (cy - r * Math.cos(a)).toFixed(1)]
}
const sector = (cx, cy, inner, outer, from, to) =>
  `M${polar(cx, cy, inner, from)}L${polar(cx, cy, outer, from)}A${outer} ${outer} 0 0 1 ${polar(cx, cy, outer, to)}` +
  `L${polar(cx, cy, inner, to)}A${inner} ${inner} 0 0 0 ${polar(cx, cy, inner, from)}Z`

const PanGraph = () => (
  <PanDial viewBox="0 0 134 134">
    <circle cx="67" cy="67" r="62" fill="none" stroke="#b39a9a" strokeOpacity="0.3" strokeWidth="4" />
    <circle cx="67" cy="67" r="60" fill="url(#panDisc)" stroke="#333436" />
    <circle cx="67" cy="67" r="45" fill="none" stroke="#2c3560" strokeOpacity="0.7" strokeWidth="8" />
    <path d={sector(67, 67, 23, 60, -50, 50)} fill="#33857f" fillOpacity="0.7" />
    {[14, 29, 43].map(r => <circle key={r} cx="67" cy="67" r={r} fill="none" stroke="#8b86a8" strokeOpacity="0.7" />)}
    {[0, -30, 30, 120, 240].map(angle => (
      <path key={angle} d={`M67 67L${polar(67, 67, 60, angle)}`} stroke="#9a96ac" strokeOpacity="0.8" />
    ))}
    <circle cx="67" cy="24" r="5" fill="#fff" />
    {[-30, 30, 120, 240].map(angle => {
      const [x, y] = polar(67, 67, 65, angle)
      return (
        <path
          key={angle}
          d="M-2 -5h4v4l4 5h-12l4-5z"
          fill="#e9dc35"
          stroke="#8f8420"
          strokeWidth="0.600"
          transform={`translate(${x} ${y}) rotate(${angle})`}
        />
      )
    })}
  </PanDial>
)

const AngleGraph = () => (
  <AngleDial viewBox="0 0 66 66">
    <circle cx="33" cy="33" r="31" fill="none" stroke="#a89a9a" strokeOpacity="0.4" strokeWidth="2" />
    <circle cx="33" cy="33" r="30" fill="#3e4c5d" stroke="#2b2c2e" />
    <path d={sector(33, 33, 0, 30, -90, 90)} fill="#5a9093" />
    <path d={sector(33, 33, 0, 30, -52, 52)} fill="#1c57a3" />
    <path d="M3 34q30-3 60 0" fill="none" stroke="#a9d7dc" />
    <path d="M33 33V5M30 9l3-5 3 5" fill="none" stroke="#fff" strokeWidth="1.300" />
  </AngleDial>
)

const FxPanel = () => (
  <Fragment>
    <PanelTitle $height={14} $inset={3} $size={11}><DownArrow color="#fff" />FX/AISAC</PanelTitle>
    <Effects>
      <EffectTabs>
        <EffectTab $active>FX1</EffectTab>
        <EffectTab>FX2</EffectTab>
        <EffectTab>AISAC</EffectTab>
      </EffectTabs>
      <Sends>
        <SliderRow><Caption $width={52} $inset={4} $small>ボリューム</Caption><Slider label="ボリューム" value={92} /></SliderRow>
        <SliderRow><Caption $width={52} $inset={4} $small>ピッチ</Caption><Slider label="ピッチ" value={51} range={[31, 69]} /></SliderRow>
        <SendBox>
          <Caption $small>バスセンド</Caption>
          <SendList>
            {sends.map((value, i) => (
              <SliderRow key={i} $gap={5} $height={15}>
                <Caption $width={8} $align="right">{i}</Caption>
                <Slider label={`バスセンド ${i}`} value={value} height={12} />
              </SliderRow>
            ))}
          </SendList>
        </SendBox>
      </Sends>
      <Pan>
        <PanTabs>
          <PanTab $active>パン3D</PanTab>
          <PanTab>3Dポジショニング</PanTab>
        </PanTabs>
        <PanBody>
          <PanGraph />
          <PanSliders>
            <label><Caption $small>ボリューム</Caption><Slider label="ボリューム" value={90} level={100} /></label>
            <label><Caption>内部距離</Caption><Slider label="内部距離" value={75} range={[57, 89]} /></label>
            <label><Caption>角度</Caption><Slider label="角度" value={48} range={[36, 62]} /></label>
          </PanSliders>
          <AngleGraph />
          <Distance>
            <SliderRow><Caption $width={49} $small>ボリューム</Caption><Slider label="ボリューム" value={100} muted="#6272b4" /></SliderRow>
            <Group>
              <Caption>有効角度:</Caption>
              <SliderRow $height={18}><Caption $width={49} $inset={8}>内部</Caption><Slider label="内部" value={28} level={34} muted="#6b74b8" /></SliderRow>
              <SliderRow $height={18}><Caption $width={49} $inset={8}>外部</Caption><Slider label="外部" value={52} level={56} muted="#6b74b8" /></SliderRow>
            </Group>
            <Group>
              <Caption>減衰距離:</Caption>
              <SliderRow $height={19}><Caption $width={49} $inset={8}>最小</Caption><ValueInput defaultValue="10.00" /></SliderRow>
              <SliderRow $height={19}><Caption $width={49} $inset={8}>最大</Caption><ValueInput defaultValue="10000.00" /></SliderRow>
            </Group>
          </Distance>
          <Disabled>
            <SliderRow $height={18}><Caption $width={40} $small $muted>センター</Caption><Slider label="センター" value={0} muted="#857b7a" width={160} /></SliderRow>
            <SliderRow $height={18}><Caption $width={40} $small $muted>LFE</Caption><Slider label="LFE" value={0} muted="#857b7a" width={160} /></SliderRow>
          </Disabled>
        </PanBody>
      </Pan>
    </Effects>
  </Fragment>
)

const App = () => (
  <Fragment>
    <GlobalStyle />
    <Gradients />
    <Shell>
      <SidePanel />
      <Main>
        <CueInfo />
        <Timeline />
        <FxPanel />
      </Main>
    </Shell>
  </Fragment>
)

export default App
